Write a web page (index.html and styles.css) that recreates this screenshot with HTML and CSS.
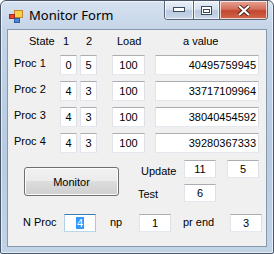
FILE: index.html
```html
<!DOCTYPE html>
<html lang="en">
<head>
    <meta charset="UTF-8">
    <title>Monitor Form</title>
    <link rel="stylesheet" href="styles.css">
</head>
<body>
    <div class="window">
        <div class="titlebar">
            <svg class="app-icon" width="14" height="13" viewBox="0 0 14 13">
                <rect x="5.5" y="0.5" width="8" height="7" fill="#f6d24a" stroke="#c9832a"/>
                <rect x="0.5" y="4.5" width="5" height="4" fill="#e2462e" stroke="#a52a18"/>
                <rect x="5.5" y="8.5" width="5" height="4" fill="#4a86d6" stroke="#2b5c9e"/>
            </svg>
            <span class="caption">Monitor Form</span>
            <div class="caption-btns">
                <div class="cbtn cbtn-min">
                    <svg width="12" height="6" viewBox="0 0 12 6"><rect x="0.5" y="0.5" width="11" height="4" fill="#fff" stroke="#3b4a5e"/></svg>
                </div>
                <div class="cbtn cbtn-max">
                    <svg width="11" height="9" viewBox="0 0 11 9"><rect x="0.5" y="0.5" width="10" height="8" fill="#fff" stroke="#3b4a5e"/><rect x="2.5" y="3.5" width="6" height="3" fill="none" stroke="#3b4a5e"/></svg>
                </div>
                <div class="cbtn cbtn-close">
                    <svg width="14" height="11" viewBox="0 0 14 11"><path d="M2 1 L12 10 M12 1 L2 10" stroke="#4a2018" stroke-width="4"/><path d="M2 1 L12 10 M12 1 L2 10" stroke="#fff" stroke-width="2.2"/></svg>
                </div>
            </div>
        </div>

        <div class="client">
            <div class="table">
                <span class="head head-state">State</span>
                <span class="head head-1">1</span>
                <span class="head head-2">2</span>
                <span class="head head-load">Load</span>
                <span class="head head-value">a value</span>

                <span class="lbl">Proc 1</span>
                <div class="tb tb-s">0</div>
                <div class="tb tb-s">5</div>
                <div class="tb tb-load">100</div>
                <div class="tb tb-val">40495759945</div>

                <span class="lbl">Proc 2</span>
                <div class="tb tb-s">4</div>
                <div class="tb tb-s">3</div>
                <div class="tb tb-load">100</div>
                <div class="tb tb-val">33717109964</div>

                <span class="lbl">Proc 3</span>
                <div class="tb tb-s">4</div>
                <div class="tb tb-s">3</div>
                <div class="tb tb-load">100</div>
                <div class="tb tb-val">38040454592</div>

                <span class="lbl">Proc 4</span>
                <div class="tb tb-s">4</div>
                <div class="tb tb-s">3</div>
                <div class="tb tb-load">100</div>
                <div class="tb tb-val">39280367333</div>
            </div>

            <div class="lower">
                <button class="monitor-btn">Monitor</button>
                <div class="params">
                    <span class="plbl plbl-update">Update</span>
                    <div class="tb tb-m">11</div>
                    <div class="tb tb-m">5</div>
                    <span class="plbl plbl-test">Test</span>
                    <div class="tb tb-m">6</div>
                </div>
            </div>

            <div class="bottom">
                <span class="blbl blbl-nproc">N Proc</span>
                <div class="tb tb-m tb-focus"><span class="sel">4</span></div>
                <span class="blbl blbl-np">np</span>
                <div class="tb tb-m">1</div>
                <span class="blbl blbl-prend">pr end</span>
                <div class="tb tb-m">3</div>
            </div>
        </div>
    </div>
</body>
</html>
```

FILE: styles.css
```css
*{
    box-sizing: border-box;
    margin: 0;
    padding: 0;
}
body{
    background: #fff;
    font-family: "Liberation Sans", Arial, sans-serif;
    font-size: 11px;
    color: #000;
}
.window{
    width: 274px;
    height: 254px;
    border: 1px solid #48566a;
    border-radius: 6px 6px 2px 2px;
    background: linear-gradient(180deg, #d6e2f0 0%, #c3d4e7 12%, #b8cbe1 60%, #c2d3e6 100%);
    box-shadow: inset 0 0 0 1px rgba(255,255,255,0.6);
    display: flex;
    flex-direction: column;
}
.titlebar{
    height: 28px;
    display: flex;
    align-items: flex-start;
}
.app-icon{
    margin: 9px 0 0 8px;
}
.caption{
    font-family: "Noto Sans", "Liberation Sans", sans-serif;
    font-size: 13px;
    line-height: 16px;
    margin: 6px 0 0 6px;
    color: #000;
}
.caption-btns{
    margin-left: auto;
    margin-right: 5px;
    display: flex;
    height: 19px;
    border: 1px solid #5a6678;
    border-top: none;
    border-radius: 0 0 4px 4px;
    overflow: hidden;
}
.cbtn{
    display: flex;
    align-items: center;
    justify-content: center;
    height: 100%;
    background: linear-gradient(180deg, #e9f0f8 0%, #d5e1ee 45%, #b9cadf 55%, #c9d8ea 100%);
    box-shadow: inset 0 0 0 1px rgba(255,255,255,0.7);
}
.cbtn-min{
    width: 29px;
    border-right: 1px solid #5a6678;
}
.cbtn-max{
    width: 26px;
    border-right: 1px solid #5a6678;
}
.cbtn-close{
    width: 47px;
    background: linear-gradient(180deg, #e8a494 0%, #d3705c 45%, #c4452e 55%, #d0684d 100%);
}
.client{
    margin: 0 6px;
    height: 218px;
    border: 1px solid #8598b0;
    background: #f0f0f0;
}
.table{
    display: grid;
    grid-template-columns: 52px 20px 32px 43px 104px;
    grid-template-rows: 14px 20px 20px 20px 20px;
    row-gap: 6px;
    padding-top: 5px;
}
.head{
    line-height: 13px;
}
.head-state{ padding-left: 21px; }
.head-1{ padding-left: 3px; }
.head-2{ padding-left: 6px; }
.head-load{ padding-left: 5px; }
.head-value{ padding-left: 28px; }
.lbl{
    line-height: 13px;
    margin-top: 2px;
    padding-left: 6px;
}
.tb{
    background: #fff;
    border: 1px solid;
    border-color: #abadb3 #dbdfe6 #e3e9ef #e2e3ea;
    height: 20px;
    line-height: 18px;
    text-align: center;
}
.tb-s{ width: 17px; }
.tb-load{ width: 33px; }
.tb-val{
    width: 104px;
    text-align: right;
    padding-right: 2px;
}
.tb-m{
    width: 32px;
    height: 18px;
    line-height: 16px;
}
.lower{
    display: flex;
    align-items: flex-start;
}
.monitor-btn{
    margin: 14px 0 0 16px;
    width: 95px;
    height: 29px;
    font-family: inherit;
    font-size: 11px;
    color: #000;
    border: 1px solid #707070;
    border-radius: 3px;
    background: linear-gradient(180deg, #f2f2f2 0%, #ebebeb 49%, #dddddd 50%, #cfcfcf 100%);
    box-shadow: inset 0 0 0 1px #fcfcfc;
}
.params{
    margin: 7px 0 0 19px;
    display: grid;
    grid-template-columns: 46px 43px 32px;
    grid-template-rows: 18px 18px;
    row-gap: 6px;
}
.plbl{
    line-height: 13px;
    margin-top: 5px;
}
.plbl-update{ padding-left: 3px; }
.plbl-test{ margin-top: 4px; }
.bottom{
    margin-top: 12px;
    display: flex;
    align-items: flex-start;
}
.blbl{
    line-height: 13px;
    margin-top: 2px;
}
.blbl-nproc{ margin-left: 15px; width: 41px; }
.blbl-np{ margin-left: 14px; width: 29px; }
.blbl-prend{ margin-left: 12px; width: 47px; }
.tb-focus{
    border-color: #3d7bad #a4c9e3 #b7d9ed #b5cfe7;
}
.sel{
    background: #3399ff;
    color: #fff;
    padding: 0 1px;
}
```
